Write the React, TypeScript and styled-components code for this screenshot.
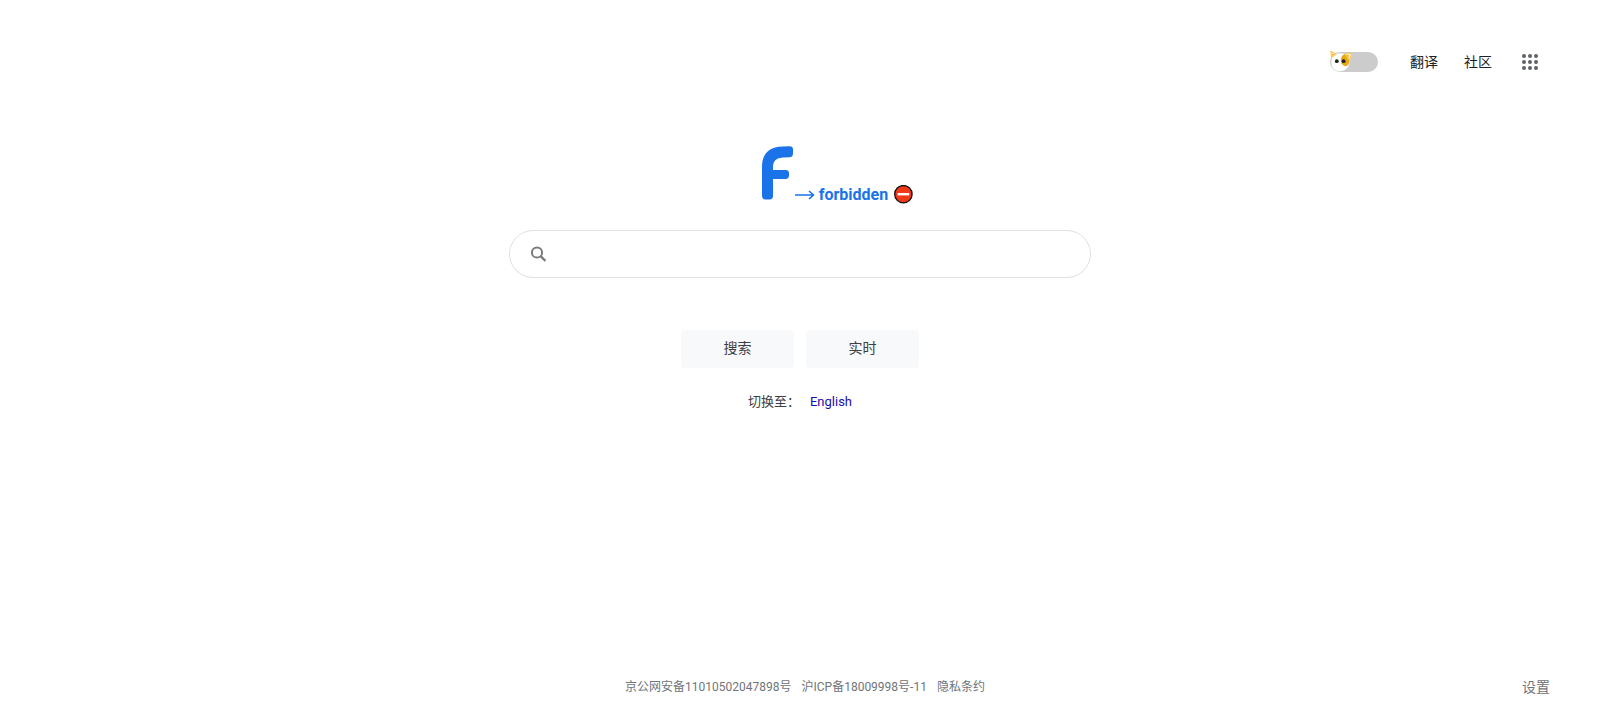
import React, { useState } from "react";
import styled, { createGlobalStyle } from "styled-components";

const GlobalStyle = createGlobalStyle`
  *, *::before, *::after { box-sizing: border-box; }
  body {
    margin: 0;
    background: #fff;
    color: #202124;
    font-family: Roboto, "Noto Sans CJK SC", sans-serif;
    font-size: 14px;
    line-height: 20px;
  }
`;

const Page = styled.div`
  display: flex;
  flex-direction: column;
  min-height: 100vh;
`;

const Header = styled.header`
  display: flex;
  align-items: center;
  justify-content: flex-end;
  padding: 52px 62px 0 0;
`;

const Switch = styled.label`
  display: flex;
  margin-right: 32px;
  cursor: pointer;
`;

const SwitchInput = styled.input`
  appearance: none;
  position: absolute;
  width: 48px;
  height: 20px;
  margin: 0;
  opacity: 0;
  cursor: pointer;
`;

const Track = styled.span<{ $on: boolean }>`
  display: flex;
  align-items: center;
  justify-content: ${(p) => (p.$on ? "flex-end" : "flex-start")};
  width: 48px;
  height: 20px;
  border-radius: 10px;
  background: ${(p) => (p.$on ? "#8ab4f8" : "#ccc")};
  svg { overflow: visible; }
`;

const Nav = styled.nav`
  display: flex;
  gap: 26px;
`;

const NavLink = styled.a`
  color: #202124;
  text-decoration: none;
`;

const IconButton = styled.button`
  display: flex;
  margin: 0 0 0 30px;
  padding: 0;
  border: 0;
  background: none;
  cursor: pointer;
`;

const Main = styled.main`
  display: flex;
  flex: 1;
  flex-direction: column;
  align-items: center;
  padding: 74px 16px 0;
`;

const Logo = styled.div`
  display: flex;
  align-items: flex-end;
  padding-left: 76px;
  color: #1a73e8;
`;

const LogoTag = styled.div`
  display: flex;
  align-items: center;
  height: 20px;
  margin: 0 0 -5px 2px;
  font-size: 16px;
  font-weight: 700;
`;

const LogoText = styled.span`
  margin: 0 6px 0 4px;
`;

const SearchForm = styled.form`
  display: flex;
  flex-direction: column;
  align-items: center;
  width: 100%;
  max-width: 582px;
  margin-top: 30px;
`;

const SearchBox = styled.label`
  display: flex;
  align-items: center;
  width: 100%;
  height: 48px;
  padding: 0 20px;
  border: 1px solid #dfe1e5;
  border-radius: 24px;
`;

const SearchInput = styled.input`
  flex: 1;
  min-width: 0;
  margin-left: 14px;
  border: 0;
  outline: 0;
  background: none;
  font: inherit;
  font-size: 16px;
`;

const Actions = styled.div`
  display: flex;
  gap: 12px;
  margin-top: 52px;
`;

const ActionButton = styled.button`
  width: 113px;
  height: 38px;
  padding: 0 0 2px;
  border: 0;
  border-radius: 4px;
  background: #f8f9fa;
  color: #3c4043;
  font: inherit;
  cursor: pointer;
`;

const Language = styled.p`
  display: flex;
  gap: 10px;
  margin: 24px 0 0;
  color: #3c4043;
  font-size: 13px;
`;

const LanguageLink = styled.a`
  color: #1a0dab;
  text-decoration: none;
`;

const Footer = styled.footer`
  display: grid;
  grid-template-columns: 1fr auto 1fr;
  align-items: center;
  padding: 0 50px 28px 60px;
`;

const Legal = styled.div`
  display: flex;
  grid-column: 2;
  gap: 10px;
`;

const LegalLink = styled.a`
  color: #70757a;
  font-size: 12px;
  text-decoration: none;
`;

const SettingsButton = styled.button`
  justify-self: end;
  padding: 0;
  border: 0;
  background: none;
  color: #70757a;
  font: inherit;
  cursor: pointer;
`;

const DogFace = () => (
  <svg width="22" height="20" viewBox="0 0 22 20" aria-hidden="true">
    <path d="M1.2 6L.7-.8L6.3 2Q10.2.6 14.8 2L22.2.8L20.6 6.6L19.2 8Q20 12 17.8 15.2Q14.8 19.2 9.8 19.2Q4 19.2 1.8 14Q.6 10.4 2 7Z" fill="#fff" />
    <path d="M10.8 7.5Q11.3 3.3 15 1.9L18.8 5.5Q19.9 8 19 11Q17.8 14.2 15 14.2Q10.6 12.8 10.8 7.5Z" fill="#e8a910" />
    <path d="M1.6 5.6L.9-.5L6 2.1Z" fill="#fff" stroke="#fdc54d" strokeWidth="1.1" strokeLinejoin="round" />
    <path d="M2.1 4L2.3 1.4L4.7 2.5Z" fill="#f5a20b" />
    <path d="M15.4 2.1L21.8 1.2L20.3 6L18.6 7.2Z" fill="#fff" stroke="#fdc54d" strokeWidth="1.1" strokeLinejoin="round" />
    <path d="M16.1 3.4L19.4 2.8L18.6 5.8Z" fill="#f5b72f" />
    <circle cx="6.8" cy="9.2" r="1.9" fill="#202124" />
    <circle cx="13.6" cy="9.2" r="1.9" fill="#202124" />
  </svg>
);

const AppsIcon = () => (
  <svg width="16" height="16" viewBox="0 0 16 16" fill="#5f6368" aria-hidden="true">
    {[2, 8, 14].map((y) =>
      [2, 8, 14].map((x) => <circle key={`${x}-${y}`} cx={x} cy={y} r="2" />)
    )}
  </svg>
);

const BrandMark = () => (
  <svg width="31" height="54" viewBox="0 0 31 54" role="img" aria-label="F">
    <path d="M0 21C0 7 8 .6 21 .6L27.5 .3Q31 .3 31 3.6V7.4Q31 11 27.5 11.2L21 11.5Q11 12 11 20.5V24H23.5Q27 24 27 27.4V29.6Q27 33 23.5 33H11V50Q11 53.4 7.6 53.4H3.4Q0 53.4 0 50Z" fill="#1a73e8" />
  </svg>
);

const Arrow = () => (
  <svg width="20" height="10" viewBox="0 0 20 10" fill="none" stroke="#1a73e8" strokeWidth="1.6" aria-hidden="true">
    <path d="M0 5H18.5M14 1L18.5 5L14 9" />
  </svg>
);

const NoEntry = () => (
  <svg width="20" height="20" viewBox="0 0 20 20" aria-hidden="true">
    <circle cx="9.4" cy="9.2" r="8.7" fill="#f03a17" stroke="#111" strokeWidth="1.3" />
    <rect x="3.6" y="8" width="11.6" height="2.4" fill="#fff" />
  </svg>
);

const SearchIcon = () => (
  <svg width="18" height="18" viewBox="0 0 18 18" fill="none" stroke="#7b7b7f" strokeWidth="2" aria-hidden="true">
    <circle cx="7" cy="7.5" r="5.1" />
    <path d="M10.6 11.1L15.4 15.9" strokeWidth="2.2" />
  </svg>
);

export default function App() {
  const [on, setOn] = useState(false);
  const [query, setQuery] = useState("");
  return (
    <Page>
      <GlobalStyle />
      <Header>
        <Switch>
          <SwitchInput
            type="checkbox"
            aria-label="主题"
            checked={on}
            onChange={(e) => setOn(e.target.checked)}
          />
          <Track $on={on}>
            <DogFace />
          </Track>
        </Switch>
        <Nav>
          <NavLink href="#translate">翻译</NavLink>
          <NavLink href="#community">社区</NavLink>
        </Nav>
        <IconButton type="button" aria-label="应用">
          <AppsIcon />
        </IconButton>
      </Header>
      <Main>
        <Logo>
          <BrandMark />
          <LogoTag>
            <Arrow />
            <LogoText>forbidden</LogoText>
            <NoEntry />
          </LogoTag>
        </Logo>
        <SearchForm onSubmit={(e) => e.preventDefault()}>
          <SearchBox>
            <SearchIcon />
            <SearchInput
              type="text"
              aria-label="搜索"
              value={query}
              onChange={(e) => setQuery(e.target.value)}
            />
          </SearchBox>
          <Actions>
            <ActionButton type="submit">搜索</ActionButton>
            <ActionButton type="button">实时</ActionButton>
          </Actions>
        </SearchForm>
        <Language>
          <span>切换至：</span>
          <LanguageLink href="#en">English</LanguageLink>
        </Language>
      </Main>
      <Footer>
        <Legal>
          <LegalLink href="#police">京公网安备11010502047898号</LegalLink>
          <LegalLink href="#icp">沪ICP备18009998号-11</LegalLink>
          <LegalLink href="#privacy">隐私条约</LegalLink>
        </Legal>
        <SettingsButton type="button">设置</SettingsButton>
      </Footer>
    </Page>
  );
}
